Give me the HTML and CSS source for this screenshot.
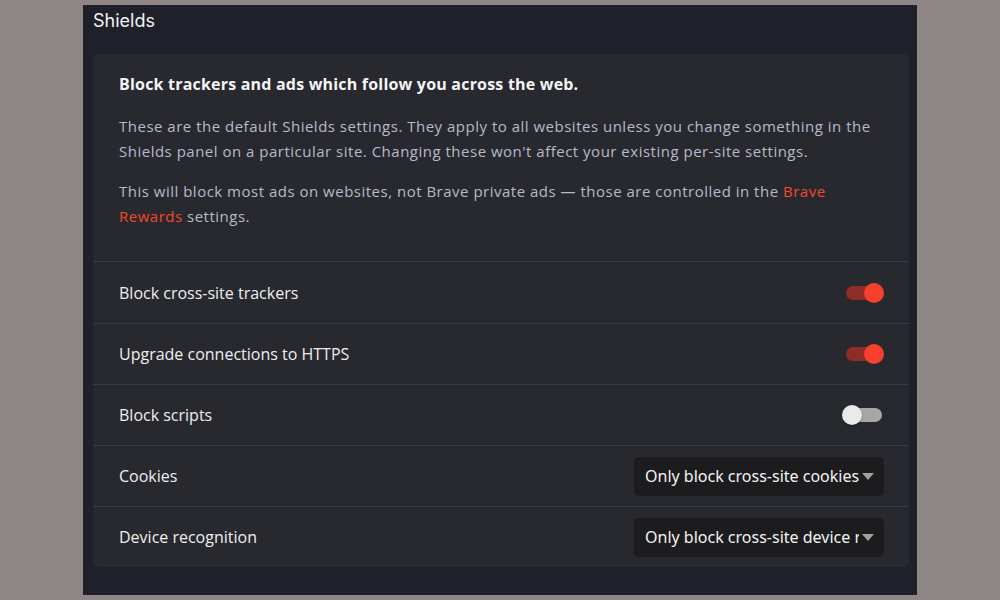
FILE: index.html
```html
<!DOCTYPE html>
<html>
<head>
<meta charset="utf-8">
<link rel="stylesheet" href="styles.css">
</head>
<body>
<div class="panel">
  <h1 class="title">Shields</h1>
  <div class="card">
    <div class="intro">
      <h2 class="heading">Block trackers and ads which follow you across the web.</h2>
      <p class="para">These are the default Shields settings. They apply to all websites unless you change something in the Shields panel on a particular site. Changing these won't affect your existing per-site settings.</p>
      <p class="para">This will block most ads on websites, not Brave private ads — those are controlled in the <a class="link">Brave Rewards</a> settings.</p>
    </div>
    <div class="row">
      <span class="label">Block cross-site trackers</span>
      <span class="toggle on"><span class="knob"></span></span>
    </div>
    <div class="row">
      <span class="label">Upgrade connections to HTTPS</span>
      <span class="toggle on"><span class="knob"></span></span>
    </div>
    <div class="row">
      <span class="label">Block scripts</span>
      <span class="toggle off"><span class="knob"></span></span>
    </div>
    <div class="row">
      <span class="label">Cookies</span>
      <div class="select"><span class="select-text">Only block cross-site cookies</span><span class="arrow"></span></div>
    </div>
    <div class="row">
      <span class="label">Device recognition</span>
      <div class="select"><span class="select-text">Only block cross-site device recognition</span><span class="arrow"></span></div>
    </div>
  </div>
</div>
</body>
</html>
```

FILE: styles.css
```css
html, body {
  margin: 0;
  padding: 0;
  background: #8e8785;
  height: 600px;
  overflow: hidden;
}
body {
  padding: 5px 83px;
  box-sizing: border-box;
}
.panel {
  background: #1f2029;
  height: 590px;
  padding: 0 8px 0 10px;
  box-sizing: border-box;
}
.title {
  margin: 0;
  font-family: "Inter", sans-serif;
  font-weight: 400;
  font-size: 18px;
  color: #f2f2f4;
  height: 49px;
  line-height: 32px;
}
.card {
  background: #28292e;
  border-radius: 5px;
}
.intro {
  padding: 19px 26px 32px;
}
.heading {
  margin: 0 0 19px;
  font-family: "Open Sans", sans-serif;
  font-weight: 700;
  font-size: 16px;
  line-height: 22px;
  letter-spacing: 0.2px;
  color: #f4f4f6;
}
.para {
  margin: 0 0 15px;
  font-family: "Open Sans", sans-serif;
  font-size: 15px;
  line-height: 25px;
  letter-spacing: 0.5px;
  color: #b6bac9;
}
.para:last-child { margin-bottom: 0; }
.link {
  color: #f4462e;
}
.row {
  display: flex;
  align-items: center;
  justify-content: space-between;
  height: 61px;
  box-sizing: border-box;
  border-top: 1px solid #3a3b41;
  padding: 0 25px 0 26px;
}
.intro + .row {
  height: 62px;
}
.label {
  font-family: "Open Sans", sans-serif;
  font-size: 16px;
  color: #eeeef0;
}
.toggle {
  position: relative;
  width: 36px;
  height: 14px;
  border-radius: 7px;
  margin-right: 2px;
}
.toggle.on { background: #8f2b29; }
.toggle.off { background: #a7a7a7; }
.knob {
  position: absolute;
  top: -3px;
  width: 20px;
  height: 20px;
  border-radius: 50%;
}
.toggle.on .knob { right: -2px; background: #f4402c; }
.toggle.off .knob { left: -4px; background: #e8ebe9; box-shadow: 0 1px 2px rgba(0,0,0,0.4); }
.select {
  display: flex;
  align-items: center;
  width: 250px;
  height: 39px;
  box-sizing: border-box;
  background: #1c1c1f;
  border-radius: 5px;
  padding: 0 10px 0 11px;
}
.select-text {
  flex: 1;
  overflow: hidden;
  white-space: nowrap;
  font-family: "Noto Sans", sans-serif;
  font-size: 16px;
  color: #f2f2f2;
}
.arrow {
  width: 0;
  height: 0;
  border-left: 6px solid transparent;
  border-right: 6px solid transparent;
  border-top: 7px solid #a0a0a0;
  margin-left: 3px;
}
```
